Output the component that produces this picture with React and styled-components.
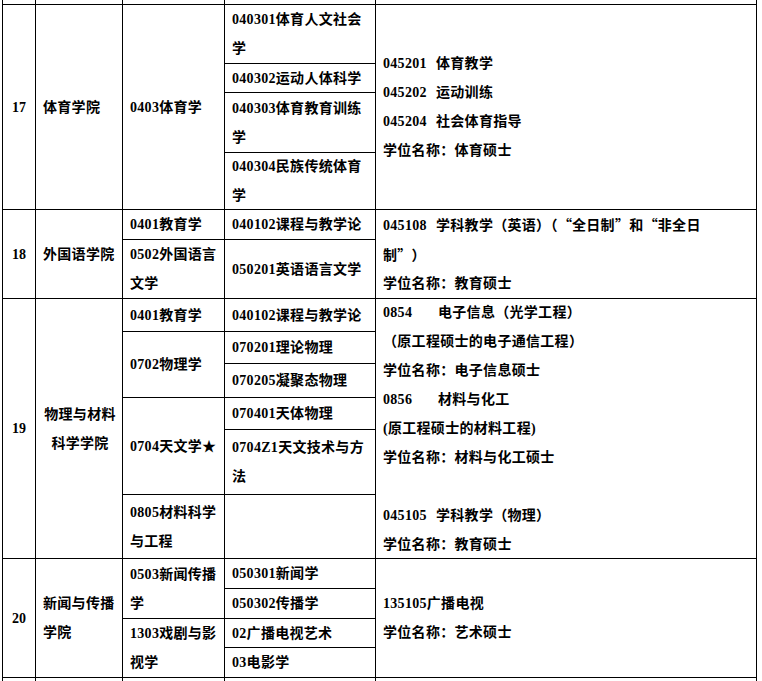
import React from 'react';
import styled, { createGlobalStyle } from 'styled-components';

const GlobalStyle = createGlobalStyle`
  html, body {
    margin: 0;
    padding: 0;
    background: #fff;
  }
  body {
    font-family: "Liberation Serif", "Noto Sans CJK SC", serif;
    color: #000;
  }
`;

const COLS = '32px 86px 101px 150px 380px';

const Table = styled.div`
  display: flex;
  flex-direction: column;
  gap: 1px;
  width: 753px;
  margin-left: 2px;
  padding: 0 1px;
  background: #000;
`;

const Group = styled.div`
  display: grid;
  grid-template-columns: ${COLS};
  grid-template-rows: ${(p) => p.$rows};
  gap: 1px;
`;

const Cell = styled.div`
  background: #fff;
  display: flex;
  flex-direction: column;
  justify-content: center;
  padding: 0 6px 0 7px;
  font-size: 14px;
  font-weight: 700;
  letter-spacing: 0.3px;
  line-height: 29px;
`;

const Blank = styled.div`
  background: #fff;
`;

const NumCell = styled(Cell)`
  grid-column: 1;
  grid-row: 1 / -1;
  align-items: center;
  padding: 0;
  letter-spacing: 0;
`;

const CollegeCell = styled(Cell)`
  grid-column: 2;
  grid-row: 1 / -1;
  padding-right: 5px;
  text-align: ${(p) => (p.$center ? 'center' : 'left')};
`;

const MajorCell = styled(Cell)`
  grid-column: 3;
  grid-row: ${(p) => p.$at} / span ${(p) => p.$span || 1};
  padding-right: 4px;
`;

const SubCell = styled(Cell)`
  grid-column: 4;
  grid-row: ${(p) => p.$at} / span ${(p) => p.$span || 1};
`;

const NoteCell = styled(Cell)`
  grid-column: 5;
  grid-row: 1 / -1;
`;

const Line = styled.div`
  white-space: nowrap;
  min-height: 29px;
`;

const Code = styled.span`
  display: inline-block;
  width: ${(p) => p.$w}px;
`;

const Quote = styled.span`
  display: inline-block;
  width: 14.3px;
  font-family: "Noto Sans CJK SC", sans-serif;
  letter-spacing: 0;
  text-align: ${(p) => (p.$open ? 'right' : 'left')};
`;

const Q1 = () => <Quote $open>“</Quote>;
const Q2 = () => <Quote>”</Quote>;

export default function App() {
  return (
    <>
      <GlobalStyle />
      <Table>
        <Group $rows="4px">
          <Blank /><Blank /><Blank /><Blank /><Blank />
        </Group>

        <Group $rows="58px 28px 59px 56px">
          <NumCell>17</NumCell>
          <CollegeCell>体育学院</CollegeCell>
          <MajorCell $at={1} $span={4}>0403体育学</MajorCell>
          <SubCell $at={1}>040301体育人文社会学</SubCell>
          <SubCell $at={2}>040302运动人体科学</SubCell>
          <SubCell $at={3}>040303体育教育训练学</SubCell>
          <SubCell $at={4}>040304民族传统体育学</SubCell>
          <NoteCell>
            <Line><Code $w={53}>045201</Code>体育教学</Line>
            <Line><Code $w={53}>045202</Code>运动训练</Line>
            <Line><Code $w={53}>045204</Code>社会体育指导</Line>
            <Line>学位名称：体育硕士</Line>
          </NoteCell>
        </Group>

        <Group $rows="29px 58px">
          <NumCell>18</NumCell>
          <CollegeCell>外国语学院</CollegeCell>
          <MajorCell $at={1}>0401教育学</MajorCell>
          <MajorCell $at={2}>0502外国语言文学</MajorCell>
          <SubCell $at={1}>040102课程与教学论</SubCell>
          <SubCell $at={2}>050201英语语言文学</SubCell>
          <NoteCell>
            <Line>
              <Code $w={53}>045108</Code>学科教学（英语）（<Q1 />全日制<Q2 />和<Q1 />非全日
            </Line>
            <Line>制<Q2 />）</Line>
            <Line>学位名称：教育硕士</Line>
          </NoteCell>
        </Group>

        <Group $rows="32px 31px 33px 31px 64px 63px">
          <NumCell>19</NumCell>
          <CollegeCell $center>物理与材料科学学院</CollegeCell>
          <MajorCell $at={1}>0401教育学</MajorCell>
          <MajorCell $at={2} $span={2}>0702物理学</MajorCell>
          <MajorCell $at={4} $span={2}>0704天文学★</MajorCell>
          <MajorCell $at={6}>0805材料科学与工程</MajorCell>
          <SubCell $at={1}>040102课程与教学论</SubCell>
          <SubCell $at={2}>070201理论物理</SubCell>
          <SubCell $at={3}>070205凝聚态物理</SubCell>
          <SubCell $at={4}>070401天体物理</SubCell>
          <SubCell $at={5}>0704Z1天文技术与方法</SubCell>
          <SubCell $at={6} />
          <NoteCell>
            <Line><Code $w={55}>0854</Code>电子信息（光学工程）</Line>
            <Line>（原工程硕士的电子通信工程）</Line>
            <Line>学位名称：电子信息硕士</Line>
            <Line><Code $w={55}>0856</Code>材料与化工</Line>
            <Line>(原工程硕士的材料工程)</Line>
            <Line>学位名称：材料与化工硕士</Line>
            <Line />
            <Line><Code $w={53}>045105</Code>学科教学（物理）</Line>
            <Line>学位名称：教育硕士</Line>
          </NoteCell>
        </Group>

        <Group $rows="29px 29px 28px 29px">
          <NumCell>20</NumCell>
          <CollegeCell>新闻与传播学院</CollegeCell>
          <MajorCell $at={1} $span={2}>0503新闻传播学</MajorCell>
          <MajorCell $at={3} $span={2}>1303戏剧与影视学</MajorCell>
          <SubCell $at={1}>050301新闻学</SubCell>
          <SubCell $at={2}>050302传播学</SubCell>
          <SubCell $at={3}>02广播电视艺术</SubCell>
          <SubCell $at={4}>03电影学</SubCell>
          <NoteCell>
            <Line>135105广播电视</Line>
            <Line>学位名称：艺术硕士</Line>
          </NoteCell>
        </Group>

        <Group $rows="10px">
          <Blank /><Blank /><Blank /><Blank /><Blank />
        </Group>
      </Table>
    </>
  );
}
